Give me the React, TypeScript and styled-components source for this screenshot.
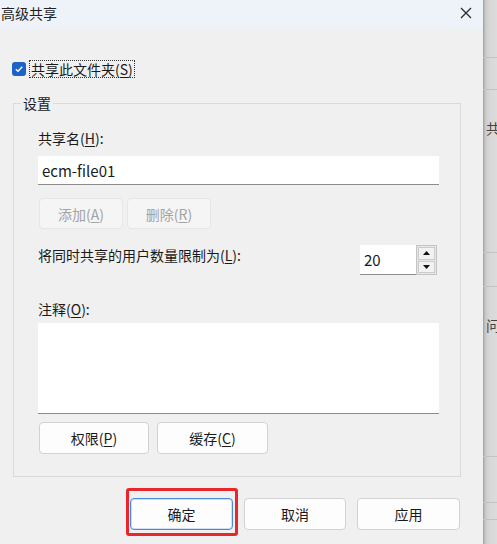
import React from "react";
import styled, { createGlobalStyle } from "styled-components";

const Global = createGlobalStyle`
  html, body { margin: 0; padding: 0; background: #f0f0f0; }
  body { font-family: "Noto Sans CJK SC", "Noto Sans", sans-serif; font-size: 14px; color: #1a1a1a; }
  * { box-sizing: border-box; }
`;

const Screen = styled.div`
  display: flex;
  width: 497px;
  height: 544px;
  overflow: hidden;
`;

const Dialog = styled.div`
  width: 483px;
  height: 544px;
  background: #f0f0f0;
  display: flex;
  flex-direction: column;
`;

const TitleBar = styled.div`
  height: 29px;
  background: #eef2f9;
  display: flex;
  align-items: center;
  justify-content: space-between;
  padding: 0 11px 4px 1px;
`;

const Title = styled.span`
  font-size: 14px;
  line-height: 20px;
  color: #222;
`;

const Body = styled.div`
  display: flex;
  flex-direction: column;
  padding: 30px 22px 0 13px;
`;

const CheckRow = styled.label`
  display: flex;
  align-items: center;
  gap: 3px;
  height: 19px;
  margin-left: -1px;
`;

const CheckBox = styled.span`
  width: 14px;
  height: 14px;
  border-radius: 3px;
  background: #1b63c6;
  display: flex;
  align-items: center;
  justify-content: center;
`;

const FocusLabel = styled.span`
  border: 1px dotted #333;
  padding: 0 1px;
  line-height: 16px;
  height: 18px;
`;

const Group = styled.fieldset`
  margin: 15px 0 0 0;
  padding: 0;
  border: 1px solid #dadada;
  border-radius: 0;
  min-width: 0;
`;

const Legend = styled.legend`
  margin-left: 7px;
  padding: 0 2px;
  line-height: 20px;
  font-size: 14px;
`;

const GroupInner = styled.div`
  display: flex;
  flex-direction: column;
  padding: 15px 21px 22px 24px;
`;

const Label = styled.div<{ $mt?: number }>`
  line-height: 20px;
  margin-top: ${(p) => p.$mt ?? 0}px;
`;

const TextInput = styled.div`
  height: 29px;
  margin-top: 8px;
  background: #fff;
  border-bottom: 1px solid #8c8c8c;
  display: flex;
  align-items: center;
  padding-left: 4px;
  font-size: 15px;
`;

const ButtonRow = styled.div<{ $mt: number; $gap: number }>`
  display: flex;
  gap: ${(p) => p.$gap}px;
  margin-top: ${(p) => p.$mt}px;
  padding-left: 1px;
`;

const Button = styled.button<{ $w: number; $h: number; $disabled?: boolean; $primary?: boolean }>`
  position: relative;
  width: ${(p) => p.$w}px;
  height: ${(p) => p.$h}px;
  border-radius: 4px;
  font-family: inherit;
  font-size: 14px;
  padding: 0;
  background: ${(p) => (p.$disabled ? "#f5f5f5" : "#fdfdfd")};
  color: ${(p) => (p.$disabled ? "#a3a3a3" : "#1a1a1a")};
  border: 1px solid ${(p) => (p.$primary ? "#4a8ad8" : p.$disabled ? "#e6e6e6" : "#d2d2d2")};
  box-shadow: ${(p) => (p.$primary ? "inset 0 0 0 1px #cfe0f5" : "none")};
`;

const RedMark = styled.span`
  position: absolute;
  top: -11px;
  left: -5px;
  right: -6px;
  bottom: -7px;
  border: 3px solid #e8262b;
  border-radius: 3px;
  pointer-events: none;
`;

const LimitRow = styled.div`
  display: flex;
  justify-content: space-between;
  align-items: flex-start;
  margin-top: 16px;
  height: 30px;
`;

const Spinner = styled.div`
  display: flex;
  height: 30px;
  margin-right: 2px;
`;

const SpinInput = styled.div`
  width: 56px;
  height: 30px;
  background: #fff;
  border-bottom: 1px solid #8c8c8c;
  display: flex;
  align-items: center;
  padding-left: 4px;
  font-size: 15px;
`;

const SpinButtons = styled.div`
  width: 21px;
  border: 1px solid #c4c4c4;
  background: #e6e6e6;
  display: flex;
  flex-direction: column;
  padding: 1px;
  gap: 1px;
`;

const SpinBtn = styled.div`
  flex: 1;
  background: #f2f2f2;
  border: 1px solid #cdcdcd;
  display: flex;
  align-items: center;
  justify-content: center;
`;

const TextArea = styled.div`
  height: 91px;
  margin-top: 4px;
  background: #fff;
  border-bottom: 1px solid #8c8c8c;
`;

const Footer = styled.div`
  display: flex;
  gap: 11px;
  margin-top: 21px;
  padding-left: 117px;
`;

const Strip = styled.div`
  flex: 1;
  display: flex;
  flex-direction: column;
  background: linear-gradient(to right, #9c9c9c 0, #b4b4b4 1px, #cdcdcd 3px, #d8d8d8 7px, #dcdcdc 100%);
  overflow: hidden;
`;

const StripSeg = styled.div<{ $h: number; $line?: boolean }>`
  height: ${(p) => p.$h}px;
  flex-shrink: 0;
  border-bottom: ${(p) => (p.$line ? "1px solid #c2c2c2" : "none")};
  display: flex;
  align-items: center;
  padding-left: 3px;
  font-size: 14px;
  color: #444;
  white-space: nowrap;
`;

const Key = styled.u`
  text-underline-offset: 2px;
`;

export default function App() {
  return (
    <>
      <Global />
      <Screen>
        <Dialog>
          <TitleBar>
            <Title>高级共享</Title>
            <svg width="12" height="12" viewBox="0 0 12 12">
              <path d="M1 1 L11 11 M11 1 L1 11" stroke="#2b2b2b" strokeWidth="1.3" fill="none" />
            </svg>
          </TitleBar>
          <Body>
            <CheckRow>
              <CheckBox>
                <svg width="10" height="10" viewBox="0 0 10 10">
                  <path d="M1.8 5.2 L4 7.3 L8.3 2.8" stroke="#fff" strokeWidth="1.3" fill="none" />
                </svg>
              </CheckBox>
              <FocusLabel>
                共享此文件夹(<Key>S</Key>)
              </FocusLabel>
            </CheckRow>
            <Group>
              <Legend>设置</Legend>
              <GroupInner>
                <Label>
                  共享名(<Key>H</Key>):
                </Label>
                <TextInput>ecm-file01</TextInput>
                <ButtonRow $mt={13} $gap={4}>
                  <Button $w={84} $h={31} $disabled>
                    添加(<Key>A</Key>)
                  </Button>
                  <Button $w={84} $h={31} $disabled>
                    删除(<Key>R</Key>)
                  </Button>
                </ButtonRow>
                <LimitRow>
                  <Label>
                    将同时共享的用户数量限制为(<Key>L</Key>):
                  </Label>
                  <Spinner>
                    <SpinInput>20</SpinInput>
                    <SpinButtons>
                      <SpinBtn>
                        <svg width="7" height="4" viewBox="0 0 7 4">
                          <path d="M0 4 L3.5 0 L7 4 Z" fill="#111" />
                        </svg>
                      </SpinBtn>
                      <SpinBtn>
                        <svg width="7" height="4" viewBox="0 0 7 4">
                          <path d="M0 0 L7 0 L3.5 4 Z" fill="#111" />
                        </svg>
                      </SpinBtn>
                    </SpinButtons>
                  </Spinner>
                </LimitRow>
                <Label $mt={24}>
                  注释(<Key>O</Key>):
                </Label>
                <TextArea />
                <ButtonRow $mt={8} $gap={8}>
                  <Button $w={110} $h={32}>
                    权限(<Key>P</Key>)
                  </Button>
                  <Button $w={111} $h={32}>
                    缓存(<Key>C</Key>)
                  </Button>
                </ButtonRow>
              </GroupInner>
            </Group>
            <Footer>
              <Button $w={103} $h={32} $primary>
                确定
                <RedMark />
              </Button>
              <Button $w={102} $h={32}>
                取消
              </Button>
              <Button $w={103} $h={32}>
                应用
              </Button>
            </Footer>
          </Body>
        </Dialog>
        <Strip>
          <StripSeg $h={58} $line />
          <StripSeg $h={32} $line />
          <StripSeg $h={76}>共</StripSeg>
          <StripSeg $h={87} $line />
          <StripSeg $h={34} $line />
          <StripSeg $h={76}>问</StripSeg>
          <StripSeg $h={94} $line />
          <StripSeg $h={46} $line />
          <StripSeg $h={17} $line />
          <StripSeg $h={24} />
        </Strip>
      </Screen>
    </>
  );
}
